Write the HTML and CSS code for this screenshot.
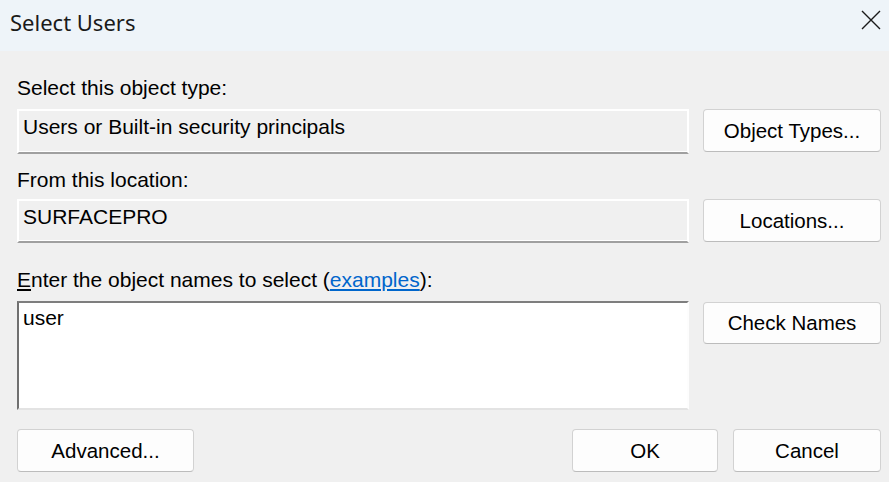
FILE: index.html
```html
<!DOCTYPE html>
<html lang="en">
<head>
<meta charset="utf-8">
<title>Select Users</title>
<link rel="stylesheet" href="styles.css">
</head>
<body>
<div class="dialog">
  <header class="titlebar">
    <span class="title">Select Users</span>
    <button class="close" aria-label="Close">
      <svg width="20" height="20" viewBox="0 0 20 20"><path d="M1 1 L19 19 M19 1 L1 19" stroke="#1a1a1a" stroke-width="1.4" fill="none"/></svg>
    </button>
  </header>
  <main class="content">
    <div class="label l1">Select this object type:</div>
    <div class="row r1">
      <div class="field">Users or Built-in security principals</div>
      <button class="btn">Object Types...</button>
    </div>
    <div class="label l2">From this location:</div>
    <div class="row r2">
      <div class="field f2">SURFACEPRO</div>
      <button class="btn">Locations...</button>
    </div>
    <div class="label l3"><span class="key">E</span>nter the object names to select (<a class="link" href="#">examples</a>):</div>
    <div class="row r3">
      <div class="textbox">user</div>
      <button class="btn check">Check Names</button>
    </div>
    <div class="footer">
      <button class="btn adv">Advanced...</button>
      <div class="spacer"></div>
      <button class="btn ok">OK</button>
      <button class="btn cancel">Cancel</button>
    </div>
  </main>
</div>
</body>
</html>
```

FILE: styles.css
```css
* { box-sizing: border-box; }
html, body { margin: 0; padding: 0; }
body {
  width: 889px;
  height: 482px;
  overflow: hidden;
  background: #f0f0f0;
  font-family: "Liberation Sans", Arial, sans-serif;
  font-size: 21px;
  color: #000;
}
.dialog { width: 889px; height: 482px; }
.titlebar {
  height: 51px;
  background: #eef4f9;
  display: flex;
  justify-content: space-between;
  align-items: flex-start;
}
.title {
  font-family: "Noto Sans", "Open Sans", sans-serif;
  font-size: 22px;
  line-height: 30px;
  margin-top: 7px;
  margin-left: 10px;
  color: #1a1a1a;
}
.close {
  border: 0;
  background: transparent;
  padding: 0;
  margin: 10px 8px 0 0;
  width: 20px;
  height: 20px;
  display: block;
}
.close svg { display: block; }
.content { padding: 0 8px 0 17px; }
.label { line-height: 24px; height: 24px; white-space: nowrap; }
.l1 { margin-top: 25px; }
.l2 { margin-top: 14px; }
.l3 { margin-top: 25px; }
.key { text-decoration: underline; text-underline-offset: 2px; }
.link { color: #0066cc; text-decoration: underline; text-underline-offset: 2px; }
.row {
  display: grid;
  grid-template-columns: 672px 178px;
  column-gap: 14px;
  align-items: start;
}
.r1 { margin-top: 9px; }
.r2 { margin-top: 7px; }
.r3 { margin-top: 9px; }
.field {
  height: 45px;
  background: #f0f0f0;
  border-top: 2px solid #fff;
  border-left: 2px solid #fff;
  border-right: 2px solid #fff;
  border-bottom: 2px solid #a0a0a0;
  box-shadow: inset 0 -1px 0 #fff;
  padding: 4px 4px 0 4px;
  line-height: 24px;
  white-space: nowrap;
}
.f2 { height: 44px; }
.textbox {
  height: 109px;
  background: #fff;
  border-top: 2px solid #7e7e7e;
  border-left: 2px solid #707070;
  border-right: 2px solid #fdfdfd;
  border-bottom: 2px solid #e3e3e3;
  padding: 3px 4px 0 4px;
  line-height: 24px;
}
.btn {
  font-family: "Liberation Sans", Arial, sans-serif;
  font-size: 20.5px;
  color: #000;
  height: 43px;
  background: #fdfdfd;
  border: 1px solid #d2d2d2;
  border-bottom-color: #bcbcbc;
  border-radius: 4px;
  padding: 0;
  margin: 0;
  text-align: center;
}
.check { height: 42px; margin-top: 1px; }
.r2 .btn { height: 43px; }
.footer {
  display: flex;
  margin-top: 19px;
  align-items: flex-start;
}
.adv { width: 177px; }
.spacer { flex: 1; }
.ok { width: 146px; }
.cancel { width: 148px; margin-left: 15px; }
```
